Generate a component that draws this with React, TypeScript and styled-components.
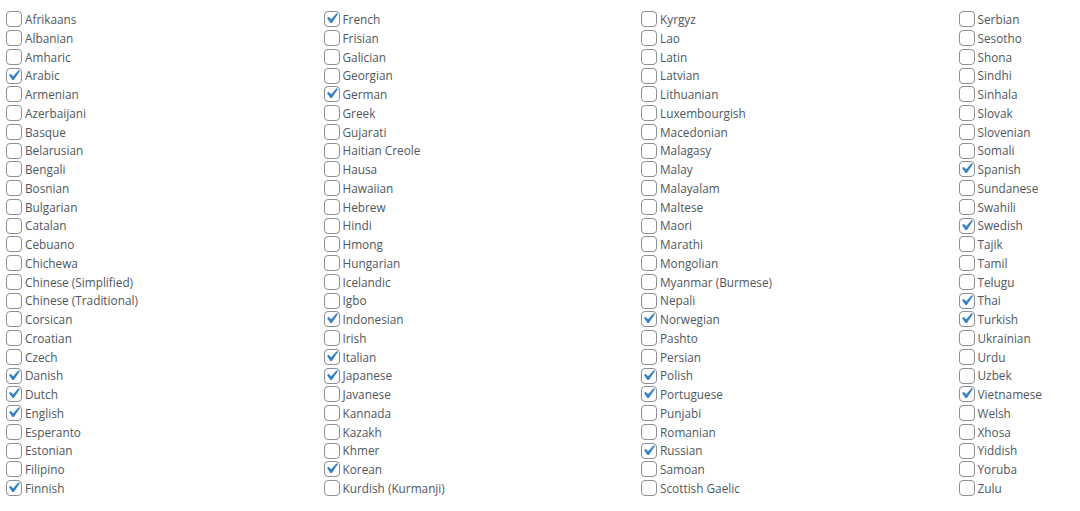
import styled, { createGlobalStyle } from 'styled-components';

const GlobalStyle = createGlobalStyle`
  html, body {
    margin: 0;
    padding: 0;
    background: #ffffff;
  }
  body {
    font-family: "Open Sans", "Noto Sans", sans-serif;
    color: #50575e;
    overflow: hidden;
  }
`;

const columns: string[][] = [
  ['Afrikaans', 'Albanian', 'Amharic', 'Arabic', 'Armenian', 'Azerbaijani', 'Basque', 'Belarusian', 'Bengali', 'Bosnian', 'Bulgarian', 'Catalan', 'Cebuano', 'Chichewa', 'Chinese (Simplified)', 'Chinese (Traditional)', 'Corsican', 'Croatian', 'Czech', 'Danish', 'Dutch', 'English', 'Esperanto', 'Estonian', 'Filipino', 'Finnish'],
  ['French', 'Frisian', 'Galician', 'Georgian', 'German', 'Greek', 'Gujarati', 'Haitian Creole', 'Hausa', 'Hawaiian', 'Hebrew', 'Hindi', 'Hmong', 'Hungarian', 'Icelandic', 'Igbo', 'Indonesian', 'Irish', 'Italian', 'Japanese', 'Javanese', 'Kannada', 'Kazakh', 'Khmer', 'Korean', 'Kurdish (Kurmanji)'],
  ['Kyrgyz', 'Lao', 'Latin', 'Latvian', 'Lithuanian', 'Luxembourgish', 'Macedonian', 'Malagasy', 'Malay', 'Malayalam', 'Maltese', 'Maori', 'Marathi', 'Mongolian', 'Myanmar (Burmese)', 'Nepali', 'Norwegian', 'Pashto', 'Persian', 'Polish', 'Portuguese', 'Punjabi', 'Romanian', 'Russian', 'Samoan', 'Scottish Gaelic'],
  ['Serbian', 'Sesotho', 'Shona', 'Sindhi', 'Sinhala', 'Slovak', 'Slovenian', 'Somali', 'Spanish', 'Sundanese', 'Swahili', 'Swedish', 'Tajik', 'Tamil', 'Telugu', 'Thai', 'Turkish', 'Ukrainian', 'Urdu', 'Uzbek', 'Vietnamese', 'Welsh', 'Xhosa', 'Yiddish', 'Yoruba', 'Zulu'],
];

const checked = new Set([
  'Arabic', 'Danish', 'Dutch', 'English', 'Finnish',
  'French', 'German', 'Indonesian', 'Italian', 'Japanese', 'Korean',
  'Norwegian', 'Polish', 'Portuguese', 'Russian',
  'Spanish', 'Swedish', 'Thai', 'Turkish', 'Vietnamese',
]);

const Grid = styled.div`
  display: grid;
  grid-template-columns: repeat(3, 317.5px) 1fr;
  padding: 10px 0 0 6px;
`;

const Column = styled.div`
  display: flex;
  flex-direction: column;
  min-width: 0;
`;

const Row = styled.label`
  display: flex;
  align-items: center;
  height: 18.75px;
  font-size: 11.8px;
  line-height: 1.4;
  white-space: nowrap;
`;

const Box = styled.span<{ $on: boolean }>`
  position: relative;
  box-sizing: border-box;
  width: 16px;
  height: 16px;
  flex: 0 0 16px;
  margin-right: 3px;
  border: 1px solid #8c8f94;
  border-radius: 4px;
  background: #fff;

  svg {
    position: absolute;
    left: -4px;
    top: -4px;
    width: 21px;
    height: 21px;
    display: ${(p) => (p.$on ? 'block' : 'none')};
  }
`;

const Check = () => (
  <svg viewBox="0 0 20 20">
    <path d="M14.83 4.89l1.34.94-5.81 8.38H9.02L5.78 9.67l1.34-1.25 2.57 2.4z" fill="#3582c4" />
  </svg>
);

const App = () => {
  return (
    <>
      <GlobalStyle />
      <Grid>
        {columns.map((col, i) => (
          <Column key={i}>
            {col.map((name) => (
              <Row key={name}>
                <Box $on={checked.has(name)}>
                  <Check />
                </Box>
                {name}
              </Row>
            ))}
          </Column>
        ))}
      </Grid>
    </>
  );
};

export default App;
